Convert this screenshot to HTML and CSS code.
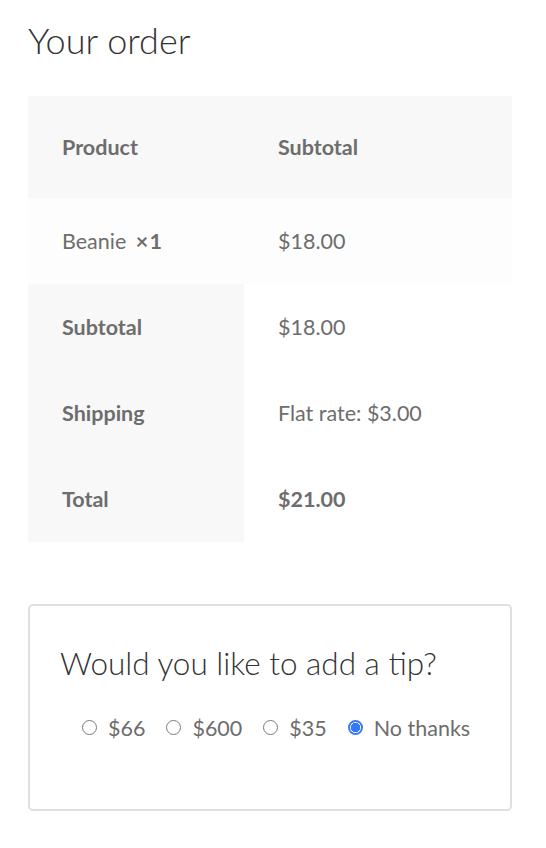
FILE: index.html
```html
<!DOCTYPE html>
<html lang="en">
<head>
<meta charset="utf-8">
<title>Your order</title>
<link rel="stylesheet" href="styles.css">
</head>
<body>
<main class="page">
  <h2 class="order-title">Your order</h2>
  <table class="order-table">
    <thead>
      <tr class="head-row">
        <th class="col-product">Product</th>
        <th class="col-total">Subtotal</th>
      </tr>
    </thead>
    <tbody>
      <tr class="item-row">
        <td>Beanie <strong class="qty">&times;&#8202;1</strong></td>
        <td>$18.00</td>
      </tr>
    </tbody>
    <tfoot>
      <tr class="foot-row">
        <th>Subtotal</th>
        <td>$18.00</td>
      </tr>
      <tr class="foot-row">
        <th>Shipping</th>
        <td>Flat rate: $3.00</td>
      </tr>
      <tr class="foot-row">
        <th>Total</th>
        <td><strong>$21.00</strong></td>
      </tr>
    </tfoot>
  </table>

  <section class="tip-box">
    <h3 class="tip-title">Would you like to add a tip?</h3>
    <div class="tip-options">
      <label class="tip-option"><input class="radio" type="radio" name="tip" value="66"><span>$66</span></label>
      <label class="tip-option"><input class="radio" type="radio" name="tip" value="600"><span>$600</span></label>
      <label class="tip-option"><input class="radio" type="radio" name="tip" value="35"><span>$35</span></label>
      <label class="tip-option"><input class="radio" type="radio" name="tip" value="0" checked><span>No thanks</span></label>
    </div>
  </section>
</main>
</body>
</html>
```

FILE: styles.css
```css
html, body {
  margin: 0;
  padding: 0;
  background: #ffffff;
}

body {
  font-family: Lato, "Open Sans", sans-serif;
  color: #6d6d6d;
  font-size: 21.5px;
}

.page {
  width: 484px;
  padding: 0 34px 0 28px;
}

.order-title {
  font-weight: 300;
  font-size: 36px;
  line-height: 1;
  color: #333333;
  margin: 22px 0 38px;
}

.order-table {
  width: 484px;
  border-collapse: collapse;
  border-spacing: 0;
  table-layout: fixed;
}

.order-table th,
.order-table td {
  text-align: left;
  padding: 0 34px;
  vertical-align: middle;
}

.col-product {
  width: 148px;
}

.head-row th {
  height: 102px;
  background: #f8f8f8;
  font-weight: 700;
}

.item-row td {
  height: 86px;
  background: #fdfdfd;
}

.qty {
  font-weight: 700;
  margin-left: 4px;
}

.foot-row th {
  height: 86px;
  background: #f8f8f8;
  font-weight: 700;
}

.foot-row td {
  background: #ffffff;
}

.tip-box {
  margin-top: 62px;
  height: 203px;
  border: 2px solid #e1dde1;
  border-radius: 5px;
  padding: 0 30px;
}

.tip-title {
  font-weight: 300;
  font-size: 31.5px;
  line-height: 1;
  color: #333333;
  margin: 42px 0 0;
}

.tip-options {
  display: flex;
  gap: 21px;
  margin: 35px 0 0 22px;
  align-items: center;
  line-height: 26px;
}

.tip-option {
  display: flex;
  align-items: center;
  gap: 11px;
  white-space: nowrap;
}

.radio {
  appearance: none;
  -webkit-appearance: none;
  margin: 0;
  width: 15px;
  height: 15px;
  border: 1.5px solid #7a7a7a;
  border-radius: 50%;
  box-sizing: border-box;
  background: #ffffff;
  flex: none;
}

.radio:checked {
  border: 2px solid #3478f6;
  background: radial-gradient(circle, #3478f6 0 4.5px, #ffffff 5px);
}
```
